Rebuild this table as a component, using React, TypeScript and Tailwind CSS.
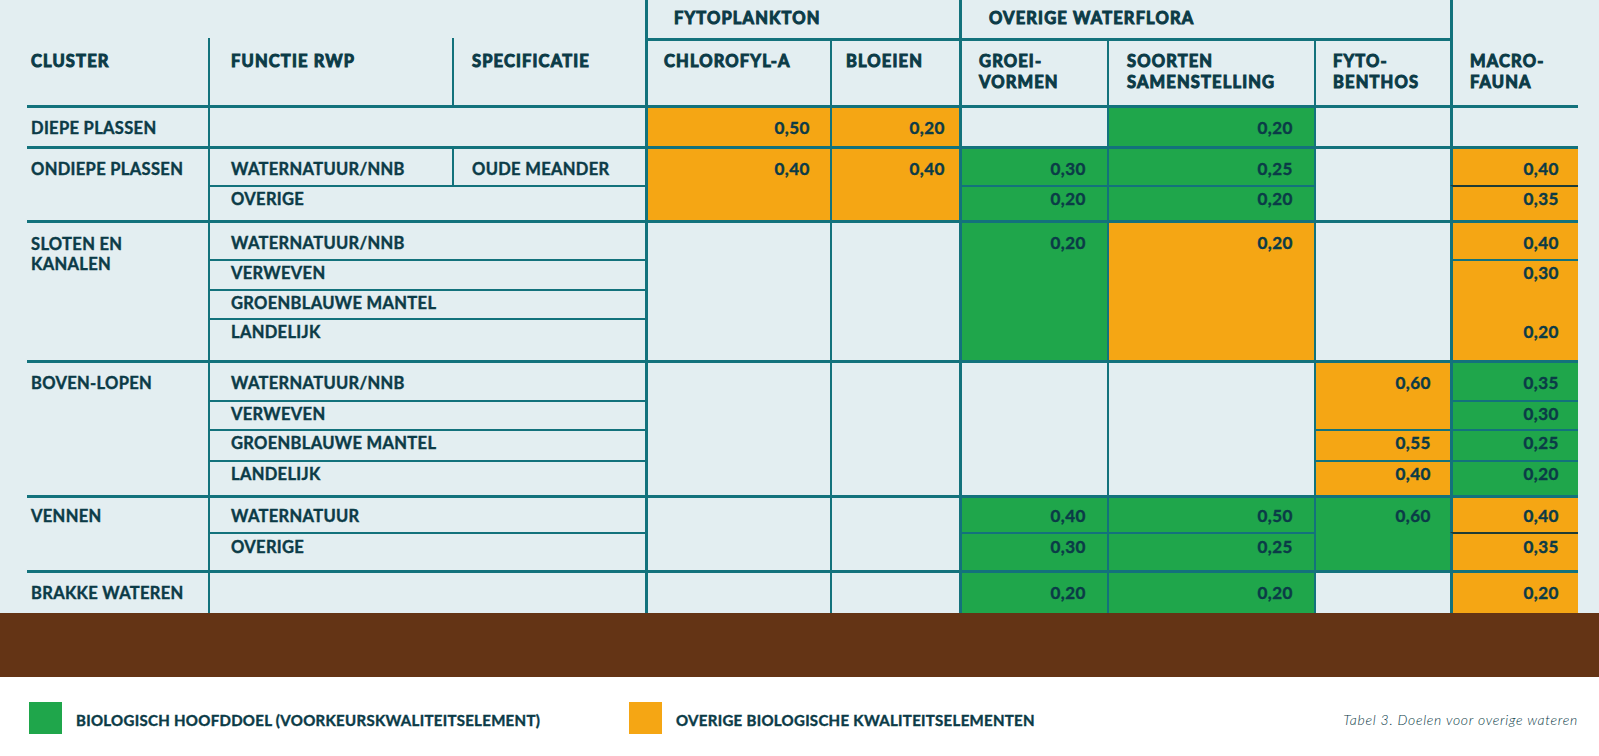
import React from "react";

const LINE = "border-[#13727c]";
const HEAD = "font-bold text-[16.5px] leading-[21px] tracking-[0.07em] text-[#0b3b47] whitespace-nowrap [-webkit-text-stroke:1px]";
const TXT = "font-bold text-[16.5px] leading-[18px] tracking-[0.02em] text-[#0b3b47] whitespace-nowrap [-webkit-text-stroke:0.4px]";
const NUM = "font-bold text-[17px] leading-[18px] tracking-[0.03em] text-[#0b3b47] text-right whitespace-nowrap [-webkit-text-stroke:0.4px]";
const LEG = "ml-[14px] pt-[3px] font-bold text-[15px] leading-[18px] tracking-[0.02em] text-[#0b3b47] whitespace-nowrap [-webkit-text-stroke:0.4px]";

type P = { c: string; children?: React.ReactNode };

function H({ c, children }: P) {
  return <div className={`${LINE} ${HEAD} ${c}`}>{children}</div>;
}
function L({ c, children }: P) {
  return <div className={`${LINE} ${TXT} ${c}`}>{children}</div>;
}
function N({ c, children }: P) {
  return <div className={`${LINE} ${NUM} ${c}`}>{children}</div>;
}
function E({ c }: P) {
  return <div className={`${LINE} ${c}`} />;
}

export default function App() {
  return (
    <div className="w-[1599px] h-[756px] bg-white font-['Lato','Liberation_Sans',sans-serif] overflow-hidden">
      <div className="h-[613px] bg-[#e3eef1] pl-[27px]">
        <div className="grid grid-cols-[181px_244px_193px_185px_129px_148px_207px_136px_128px] grid-rows-[38px_67px_41px_39px_35px_39px_30px_29px_42px_40px_29px_31px_35px_37px_38px_43px]">
          {/* Header */}
          <H c="col-start-4 col-span-2 row-start-1 border-l-[3px] pl-[26px] pt-[8px]">FYTOPLANKTON</H>
          <H c="col-start-6 col-span-3 row-start-1 border-l-[3px] pl-[27px] pt-[8px]">OVERIGE WATERFLORA</H>
          <H c="col-start-9 row-start-1 row-span-2 border-l-[3px] pl-[17px] pt-[51px]">
            MACRO-
            <br />
            FAUNA
          </H>
          <H c="col-start-1 row-start-2 pl-[4px] pt-[13px]">CLUSTER</H>
          <H c="col-start-2 row-start-2 border-l-2 pl-[21px] pt-[13px]">FUNCTIE RWP</H>
          <H c="col-start-3 row-start-2 border-l-2 pl-[18px] pt-[13px]">SPECIFICATIE</H>
          <H c="col-start-4 row-start-2 border-l-[3px] border-t-[3px] pl-[16px] pt-[10px]">CHLOROFYL-A</H>
          <H c="col-start-5 row-start-2 border-l-2 border-t-[3px] pl-[14px] pt-[10px]">BLOEIEN</H>
          <H c="col-start-6 row-start-2 border-l-[3px] border-t-[3px] pl-[17px] pt-[10px]">
            GROEI-
            <br />
            VORMEN
          </H>
          <H c="col-start-7 row-start-2 border-l-2 border-t-[3px] pl-[18px] pt-[10px]">
            SOORTEN
            <br />
            SAMENSTELLING
          </H>
          <H c="col-start-8 row-start-2 border-l-2 border-t-[3px] pl-[17px] pt-[10px]">
            FYTO-
            <br />
            BENTHOS
          </H>

          {/* DIEPE PLASSEN */}
          <L c="col-start-1 row-start-3 border-t-[3px] pl-[4px] pt-[11px]">DIEPE PLASSEN</L>
          <E c="col-start-2 col-span-2 row-start-3 border-t-[3px] border-l-2" />
          <N c="col-start-4 row-start-3 border-t-[3px] border-l-[3px] bg-[#f5a614] pr-[20px] pt-[11px]">0,50</N>
          <N c="col-start-5 row-start-3 border-t-[3px] border-l-2 bg-[#f5a614] pr-[14px] pt-[11px]">0,20</N>
          <E c="col-start-6 row-start-3 border-t-[3px] border-l-[3px]" />
          <N c="col-start-7 row-start-3 border-t-[3px] border-l-2 bg-[#1fa64b] pr-[21px] pt-[11px]">0,20</N>
          <E c="col-start-8 row-start-3 border-t-[3px] border-l-2" />
          <E c="col-start-9 row-start-3 border-t-[3px] border-l-[3px]" />

          {/* ONDIEPE PLASSEN */}
          <L c="col-start-1 row-start-4 row-span-2 border-t-[3px] pl-[4px] pt-[11px]">ONDIEPE PLASSEN</L>
          <L c="col-start-2 row-start-4 border-t-[3px] border-l-2 pl-[21px] pt-[11px]">WATERNATUUR/NNB</L>
          <L c="col-start-3 row-start-4 border-t-[3px] border-l-2 pl-[18px] pt-[11px]">OUDE MEANDER</L>
          <L c="col-start-2 col-span-2 row-start-5 border-t-2 border-l-2 pl-[21px] pt-[3px]">OVERIGE</L>
          <N c="col-start-4 row-start-4 row-span-2 border-t-[3px] border-l-[3px] bg-[#f5a614] pr-[20px] pt-[11px]">0,40</N>
          <N c="col-start-5 row-start-4 row-span-2 border-t-[3px] border-l-2 bg-[#f5a614] pr-[14px] pt-[11px]">0,40</N>
          <N c="col-start-6 row-start-4 border-t-[3px] border-l-[3px] bg-[#1fa64b] pr-[21px] pt-[11px]">0,30</N>
          <N c="col-start-6 row-start-5 border-t-2 border-l-[3px] bg-[#1fa64b] pr-[21px] pt-[3px]">0,20</N>
          <N c="col-start-7 row-start-4 border-t-[3px] border-l-2 bg-[#1fa64b] pr-[21px] pt-[11px]">0,25</N>
          <N c="col-start-7 row-start-5 border-t-2 border-l-2 bg-[#1fa64b] pr-[21px] pt-[3px]">0,20</N>
          <E c="col-start-8 row-start-4 row-span-2 border-t-[3px] border-l-2" />
          <N c="col-start-9 row-start-4 border-t-[3px] border-l-[3px] bg-[#f5a614] pr-[19px] pt-[11px]">0,40</N>
          <N c="col-start-9 row-start-5 border-t-2 border-t-[#1e3b35] border-l-[3px] bg-[#f5a614] pr-[19px] pt-[3px]">0,35</N>

          {/* SLOTEN EN KANALEN */}
          <L c="col-start-1 row-start-6 row-span-4 border-t-[3px] pl-[4px] pt-[11px] leading-[20px]">
            SLOTEN EN
            <br />
            KANALEN
          </L>
          <L c="col-start-2 col-span-2 row-start-6 border-t-[3px] border-l-2 pl-[21px] pt-[11px]">WATERNATUUR/NNB</L>
          <L c="col-start-2 col-span-2 row-start-7 border-t-2 border-l-2 pl-[21px] pt-[3px]">VERWEVEN</L>
          <L c="col-start-2 col-span-2 row-start-8 border-t-2 border-l-2 pl-[21px] pt-[3px]">GROENBLAUWE MANTEL</L>
          <L c="col-start-2 col-span-2 row-start-9 border-t-2 border-l-2 pl-[21px] pt-[3px]">LANDELIJK</L>
          <E c="col-start-4 row-start-6 row-span-4 border-t-[3px] border-l-[3px]" />
          <E c="col-start-5 row-start-6 row-span-4 border-t-[3px] border-l-2" />
          <N c="col-start-6 row-start-6 row-span-4 border-t-[3px] border-l-[3px] bg-[#1fa64b] pr-[21px] pt-[11px]">0,20</N>
          <N c="col-start-7 row-start-6 row-span-4 border-t-[3px] border-l-2 bg-[#f5a614] pr-[21px] pt-[11px]">0,20</N>
          <E c="col-start-8 row-start-6 row-span-4 border-t-[3px] border-l-2" />
          <N c="col-start-9 row-start-6 border-t-[3px] border-l-[3px] bg-[#f5a614] pr-[19px] pt-[11px]">0,40</N>
          <N c="col-start-9 row-start-7 border-t-2 border-l-[3px] bg-[#f5a614] pr-[19px] pt-[3px]">0,30</N>
          <E c="col-start-9 row-start-8 border-l-[3px] bg-[#f5a614]" />
          <N c="col-start-9 row-start-9 border-l-[3px] bg-[#f5a614] pr-[19px] pt-[5px]">0,20</N>

          {/* BOVEN-LOPEN */}
          <L c="col-start-1 row-start-10 row-span-4 border-t-[3px] pl-[4px] pt-[11px]">BOVEN-LOPEN</L>
          <L c="col-start-2 col-span-2 row-start-10 border-t-[3px] border-l-2 pl-[21px] pt-[11px]">WATERNATUUR/NNB</L>
          <L c="col-start-2 col-span-2 row-start-11 border-t-2 border-l-2 pl-[21px] pt-[3px]">VERWEVEN</L>
          <L c="col-start-2 col-span-2 row-start-12 border-t-2 border-l-2 pl-[21px] pt-[3px]">GROENBLAUWE MANTEL</L>
          <L c="col-start-2 col-span-2 row-start-13 border-t-2 border-l-2 pl-[21px] pt-[3px]">LANDELIJK</L>
          <E c="col-start-4 row-start-10 row-span-4 border-t-[3px] border-l-[3px]" />
          <E c="col-start-5 row-start-10 row-span-4 border-t-[3px] border-l-2" />
          <E c="col-start-6 row-start-10 row-span-4 border-t-[3px] border-l-[3px]" />
          <E c="col-start-7 row-start-10 row-span-4 border-t-[3px] border-l-2" />
          <N c="col-start-8 row-start-10 row-span-2 border-t-[3px] border-l-2 bg-[#f5a614] pr-[19px] pt-[11px]">0,60</N>
          <N c="col-start-8 row-start-12 border-t-2 border-l-2 bg-[#f5a614] pr-[19px] pt-[3px]">0,55</N>
          <N c="col-start-8 row-start-13 border-t-2 border-l-2 bg-[#f5a614] pr-[19px] pt-[3px]">0,40</N>
          <N c="col-start-9 row-start-10 border-t-[3px] border-l-[3px] bg-[#1fa64b] pr-[19px] pt-[11px]">0,35</N>
          <N c="col-start-9 row-start-11 border-t-2 border-l-[3px] bg-[#1fa64b] pr-[19px] pt-[3px]">0,30</N>
          <N c="col-start-9 row-start-12 border-t-2 border-l-[3px] bg-[#1fa64b] pr-[19px] pt-[3px]">0,25</N>
          <N c="col-start-9 row-start-13 border-t-2 border-l-[3px] bg-[#1fa64b] pr-[19px] pt-[3px]">0,20</N>

          {/* VENNEN */}
          <L c="col-start-1 row-start-14 row-span-2 border-t-[3px] pl-[4px] pt-[9px]">VENNEN</L>
          <L c="col-start-2 col-span-2 row-start-14 border-t-[3px] border-l-2 pl-[21px] pt-[9px]">WATERNATUUR</L>
          <L c="col-start-2 col-span-2 row-start-15 border-t-2 border-l-2 pl-[21px] pt-[4px]">OVERIGE</L>
          <E c="col-start-4 row-start-14 row-span-2 border-t-[3px] border-l-[3px]" />
          <E c="col-start-5 row-start-14 row-span-2 border-t-[3px] border-l-2" />
          <N c="col-start-6 row-start-14 border-t-[3px] border-l-[3px] bg-[#1fa64b] pr-[21px] pt-[9px]">0,40</N>
          <N c="col-start-6 row-start-15 border-t-2 border-l-[3px] bg-[#1fa64b] pr-[21px] pt-[4px]">0,30</N>
          <N c="col-start-7 row-start-14 border-t-[3px] border-l-2 bg-[#1fa64b] pr-[21px] pt-[9px]">0,50</N>
          <N c="col-start-7 row-start-15 border-t-2 border-l-2 bg-[#1fa64b] pr-[21px] pt-[4px]">0,25</N>
          <N c="col-start-8 row-start-14 row-span-2 border-t-[3px] border-l-2 bg-[#1fa64b] pr-[19px] pt-[9px]">0,60</N>
          <N c="col-start-9 row-start-14 border-t-[3px] border-l-[3px] bg-[#f5a614] pr-[19px] pt-[9px]">0,40</N>
          <N c="col-start-9 row-start-15 border-t-2 border-t-[#1e3b35] border-l-[3px] bg-[#f5a614] pr-[19px] pt-[4px]">0,35</N>

          {/* BRAKKE WATEREN */}
          <L c="col-start-1 row-start-16 border-t-[3px] pl-[4px] pt-[11px]">BRAKKE WATEREN</L>
          <E c="col-start-2 col-span-2 row-start-16 border-t-[3px] border-l-2" />
          <E c="col-start-4 row-start-16 border-t-[3px] border-l-[3px]" />
          <E c="col-start-5 row-start-16 border-t-[3px] border-l-2" />
          <N c="col-start-6 row-start-16 border-t-[3px] border-l-[3px] bg-[#1fa64b] pr-[21px] pt-[11px]">0,20</N>
          <N c="col-start-7 row-start-16 border-t-[3px] border-l-2 bg-[#1fa64b] pr-[21px] pt-[11px]">0,20</N>
          <E c="col-start-8 row-start-16 border-t-[3px] border-l-2" />
          <N c="col-start-9 row-start-16 border-t-[3px] border-l-[3px] bg-[#f5a614] pr-[19px] pt-[11px]">0,20</N>
        </div>
      </div>

      <div className="h-[64px] bg-[#643415]" />

      <div className="h-[79px] flex items-start pt-[25px] pl-[29px] pr-[21px]">
        <div className="flex items-center w-[600px]">
          <div className="w-[33px] h-[32px] bg-[#1fa64b]" />
          <span className={LEG}>BIOLOGISCH HOOFDDOEL (VOORKEURSKWALITEITSELEMENT)</span>
        </div>
        <div className="flex items-center">
          <div className="w-[33px] h-[32px] bg-[#f5a614]" />
          <span className={LEG}>OVERIGE BIOLOGISCHE KWALITEITSELEMENTEN</span>
        </div>
        <div className="ml-auto h-[32px] flex items-center pt-[3px] italic font-light text-[14px] tracking-[0.05em] text-[#0b3b47] whitespace-nowrap">
          Tabel 3. Doelen voor overige wateren
        </div>
      </div>
    </div>
  );
}
